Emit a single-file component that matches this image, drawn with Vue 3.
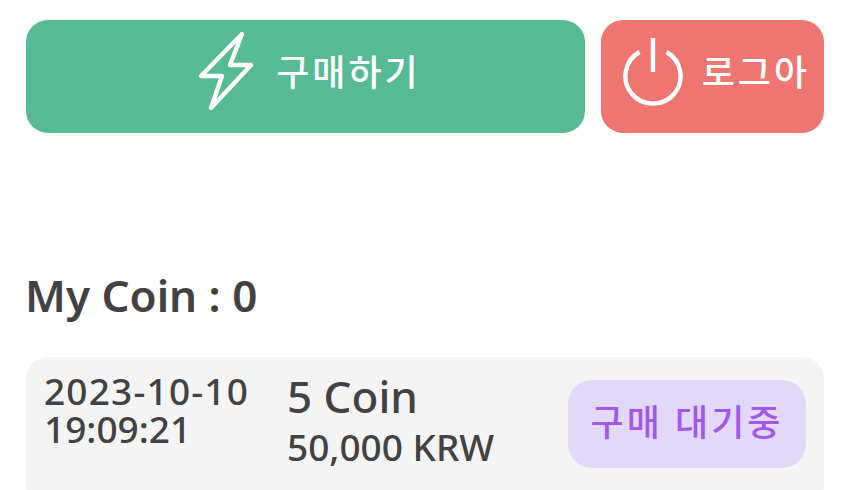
<script setup>
const order = { date: '2023-10-10', time: '19:09:21', coin: '5 Coin', price: '50,000 KRW', status: '구매 대기중' }
</script>

<template>
  <div class="page">
    <div class="actions">
      <button class="btn buy">
        <svg class="bolt" viewBox="0 0 56 80" fill="none" stroke="#fff" stroke-width="4.4" stroke-linejoin="round" stroke-linecap="round">
          <path d="M44 3 L3 45 H24 L13 77 L53 34 H32 Z" />
        </svg>
        <span class="label">구매하기</span>
      </button>
      <button class="btn logout">
        <svg class="power" viewBox="0 0 60 70" fill="none" stroke="#fff" stroke-width="4.4" stroke-linecap="butt">
          <path d="M30 2 V36" />
          <path d="M16.5 16 A27.6 27.6 0 1 0 43.5 16" />
        </svg>
        <span class="label">로그아</span>
      </button>
    </div>
    <h1 class="title">My Coin : 0</h1>
    <div class="card">
      <div class="when">
        <div class="date">{{ order.date }}</div>
        <div>{{ order.time }}</div>
      </div>
      <div class="amount">
        <div class="coin">{{ order.coin }}</div>
        <div class="price">{{ order.price }}</div>
      </div>
      <div class="badge">{{ order.status }}</div>
    </div>
  </div>
</template>

<style>
html, body { margin: 0; background: #fff; overflow: hidden; }
</style>

<style scoped>
.page {
  box-sizing: border-box;
  width: 850px;
  height: 490px;
  overflow: hidden;
  padding: 20px 26px 0;
  font-family: "Noto Sans", "Noto Sans CJK KR", sans-serif;
  color: #424242;
}
.actions { display: flex; gap: 16px; }
.btn {
  display: flex;
  align-items: center;
  justify-content: center;
  box-sizing: border-box;
  height: 113px;
  border: 0;
  border-radius: 22px;
  padding: 0 0 12px;
  color: #fff;
  font-family: inherit;
}
.buy { width: 559px; background: #56bb94; gap: 22px; padding-left: 8px; }
.logout { width: 223px; background: #ee7570; gap: 19px; padding-left: 8px; }
.bolt { width: 56px; height: 80px; }
.power { width: 60px; height: 70px; }
.label {
  margin-top: 4px;
  font-size: 36px;
  font-weight: 500;
  letter-spacing: 3px;
  line-height: 1;
}
.title {
  margin: 134px 0 0 -1px;
  font-size: 44px;
  font-weight: 600;
  line-height: 56px;
}
.card {
  display: flex;
  align-items: flex-start;
  margin-top: 34px;
  height: 150px;
  padding-left: 18px;
  background: #f4f4f4;
  border-radius: 22px;
}
.when {
  width: 243px;
  margin-top: 15px;
  font-size: 37px;
  font-weight: 500;
  line-height: 38px;
}
.date { letter-spacing: 1.2px; }
.amount { width: 281px; margin-top: 12px; }
.coin { font-size: 44px; font-weight: 500; line-height: 54px; }
.price { font-size: 37px; font-weight: 500; line-height: 48px; }
.badge {
  display: flex;
  align-items: center;
  justify-content: center;
  box-sizing: border-box;
  width: 238px;
  height: 88px;
  margin-top: 23px;
  padding-bottom: 8px;
  border-radius: 24px;
  background: #e2d8f9;
  color: #a258ec;
  font-size: 36px;
  font-weight: 500;
  letter-spacing: 3px;
}
</style>
